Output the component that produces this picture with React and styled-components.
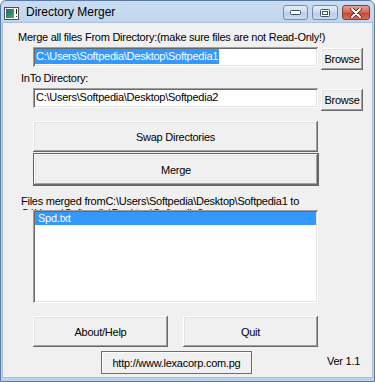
import React from "react";
import styled, { createGlobalStyle, css } from "styled-components";

const Global = createGlobalStyle`
  html, body { margin: 0; padding: 0; background: #ffffff; }
  body { width: 375px; height: 382px; overflow: hidden; }
`;

const Window = styled.div`
  width: 375px;
  height: 382px;
  box-sizing: border-box;
  display: flex;
  flex-direction: column;
  background: linear-gradient(to bottom, #cadcf1 0px, #bfd5ee 24px, #bcd3ec 100%);
  border: 1px solid #5b7aa3;
  border-radius: 6px 6px 0 0;
  font-family: "Liberation Sans", Arial, sans-serif;
  font-size: 11px;
  letter-spacing: -0.25px;
  color: #000;
`;

const TitleBar = styled.div`
  height: 22px;
  display: flex;
  align-items: flex-start;
  padding: 0 4px 0 3px;
  box-sizing: border-box;
`;

const AppIcon = styled.svg`
  margin-top: 6px;
  flex: none;
`;

const Title = styled.div`
  margin-left: 7px;
  margin-top: 3px;
  font-size: 12px;
  letter-spacing: 0;
  line-height: 16px;
  color: #000;
  flex: 1;
`;

const CaptionButtons = styled.div`
  display: flex;
  gap: 4px;
  margin-top: 4px;
`;

const CaptionBtn = styled.div`
  height: 15px;
  width: ${(p) => p.$w}px;
  box-sizing: border-box;
  border: 1px solid ${(p) => (p.$close ? "#8a3d36" : "#6f8eb5")};
  border-radius: 3px;
  display: flex;
  align-items: center;
  justify-content: center;
  ${(p) =>
    p.$close
      ? css`
          background: linear-gradient(to bottom, #e3a297 0%, #d3705f 45%, #c44a33 55%, #d96c52 100%);
        `
      : css`
          background: linear-gradient(to bottom, #e6eef8 0%, #cfdcee 45%, #bccde6 55%, #cbdaee 100%);
        `}
`;

const Client = styled.div`
  flex: 1;
  margin: 0 2px 4px 2px;
  background: #f0f0f0;
  display: flex;
  flex-direction: column;
  box-shadow: 0 0 0 1px #a9c0dc;
`;

const Label = styled.div`
  margin-left: ${(p) => p.$left}px;
  margin-top: ${(p) => p.$top}px;
  line-height: ${(p) => p.$lh || 13}px;
  white-space: ${(p) => (p.$wrap ? "normal" : "nowrap")};
  width: ${(p) => (p.$wrap ? "300px" : "auto")};
  height: ${(p) => (p.$h ? `${p.$h}px` : "auto")};
  overflow: hidden;
`;

const PathRow = styled.div`
  display: flex;
  align-items: flex-start;
  margin-left: 30px;
  margin-top: ${(p) => p.$top}px;
  gap: 3px;
`;

const sunken = css`
  box-shadow: inset 1px 1px #a0a0a0, inset -1px -1px #ffffff, inset 2px 2px #696969,
    inset -2px -2px #e3e3e3;
`;

const raised = css`
  box-shadow: inset -1px -1px #696969, inset 1px 1px #ffffff, inset -2px -2px #a0a0a0,
    inset 2px 2px #e3e3e3;
`;

const TextBox = styled.div`
  width: 285px;
  height: 20px;
  box-sizing: border-box;
  background: #fff;
  ${sunken};
  padding: 2px 0 0 2px;
  line-height: 15px;
  white-space: nowrap;
`;

const TextValue = styled.span`
  display: inline-block;
  line-height: 15px;
  padding: 0 1px 0 1px;
  background: ${(p) => (p.$selected ? "#3399ff" : "transparent")};
  color: ${(p) => (p.$selected ? "#fff" : "#000")};
`;

const Button = styled.div`
  box-sizing: border-box;
  width: ${(p) => p.$w}px;
  height: ${(p) => p.$h}px;
  margin-top: ${(p) => p.$top || 0}px;
  background: #f0f0f0;
  display: flex;
  align-items: center;
  justify-content: center;
  ${raised};
  ${(p) =>
    p.$default &&
    css`
      border: 1px solid #646464;
    `}
`;

const WideButton = styled(Button)`
  margin-left: 30px;
`;

const ListBox = styled.div`
  margin-left: 30px;
  width: 285px;
  height: 93px;
  box-sizing: border-box;
  background: #fff;
  ${sunken};
  padding: 2px;
`;

const ListItem = styled.div`
  height: 13px;
  line-height: 13px;
  padding-left: 3px;
  background: ${(p) => (p.$selected ? "#3399ff" : "transparent")};
  color: ${(p) => (p.$selected ? "#fff" : "#000")};
`;

const ButtonRow = styled.div`
  display: flex;
  gap: 15px;
  margin-left: 30px;
  margin-top: 13px;
`;

const FooterRow = styled.div`
  display: flex;
  align-items: flex-start;
  margin-top: 4px;
  margin-left: 98px;
`;

const UrlBox = styled.div`
  width: 151px;
  height: 23px;
  box-sizing: border-box;
  border: 1px solid #6d6d6d;
  box-shadow: inset 1px 1px #ffffff;
  display: flex;
  align-items: center;
  justify-content: center;
  padding-top: 1px;
`;

const Version = styled.div`
  margin-left: 75px;
  margin-top: 4px;
  line-height: 13px;
`;

function TitleIcon() {
  return (
    <AppIcon width="15" height="13" viewBox="0 0 15 13">
      <defs>
        <linearGradient id="ig" x1="0" y1="0" x2="1" y2="1">
          <stop offset="0" stopColor="#2f5f8a" />
          <stop offset="0.5" stopColor="#2d8a6e" />
          <stop offset="1" stopColor="#52b04a" />
        </linearGradient>
      </defs>
      <rect x="0.5" y="0.5" width="14" height="12" fill="#fff" stroke="#505050" />
      <rect x="2" y="2" width="8" height="9" fill="url(#ig)" />
      <rect x="12" y="2" width="1" height="5" fill="#202020" />
      <rect x="12" y="9" width="1" height="1" fill="#202020" />
    </AppIcon>
  );
}

export default function App() {
  return (
    <>
      <Global />
      <Window>
        <TitleBar>
          <TitleIcon />
          <Title>Directory Merger</Title>
          <CaptionButtons>
            <CaptionBtn $w={25}>
              <svg width="11" height="5" viewBox="0 0 11 5">
                <rect x="0.5" y="0.5" width="10" height="4" rx="1" fill="#fff" stroke="#3b4f6b" />
              </svg>
            </CaptionBtn>
            <CaptionBtn $w={26}>
              <svg width="10" height="8" viewBox="0 0 10 8">
                <rect x="0.5" y="0.5" width="9" height="7" rx="1" fill="#fff" stroke="#3b4f6b" />
                <rect x="2.5" y="2.5" width="5" height="3" fill="none" stroke="#3b4f6b" />
              </svg>
            </CaptionBtn>
            <CaptionBtn $w={28} $close>
              <svg width="12" height="10" viewBox="0 0 12 10">
                <path d="M2 1 L10 9 M10 1 L2 9" stroke="#5a1f18" strokeWidth="3.6" strokeLinecap="round" />
                <path d="M2 1 L10 9 M10 1 L2 9" stroke="#ffffff" strokeWidth="2" strokeLinecap="round" />
              </svg>
            </CaptionBtn>
          </CaptionButtons>
        </TitleBar>
        <Client>
          <Label $left={15} $top={8}>
            Merge all files From Directory:(make sure files are not Read-Only!)
          </Label>
          <PathRow $top={3}>
            <TextBox>
              <TextValue $selected>C:\Users\Softpedia\Desktop\Softpedia1</TextValue>
            </TextBox>
            <Button $w={42} $h={22} $top={1}>Browse</Button>
          </PathRow>
          <Label $left={18} $top={2}>InTo Directory:</Label>
          <PathRow $top={3}>
            <TextBox>
              <TextValue>C:\Users\Softpedia\Desktop\Softpedia2</TextValue>
            </TextBox>
            <Button $w={42} $h={22} $top={1}>Browse</Button>
          </PathRow>
          <WideButton $w={285} $h={31} $top={10}>Swap Directories</WideButton>
          <WideButton $w={286} $h={33} $top={1} $default>Merge</WideButton>
          <Label $left={18} $top={9} $wrap $h={15} $lh={12}>
            Files merged fromC:\Users\Softpedia\Desktop\Softpedia1 to C:\Users\Softpedia\Desktop\Softpedia2
          </Label>
          <ListBox>
            <ListItem $selected>Spd.txt</ListItem>
          </ListBox>
          <ButtonRow>
            <Button $w={135} $h={31}>About/Help</Button>
            <Button $w={135} $h={31}>Quit</Button>
          </ButtonRow>
          <FooterRow>
            <UrlBox>http://www.lexacorp.com.pg</UrlBox>
            <Version>Ver 1.1</Version>
          </FooterRow>
        </Client>
      </Window>
    </>
  );
}
